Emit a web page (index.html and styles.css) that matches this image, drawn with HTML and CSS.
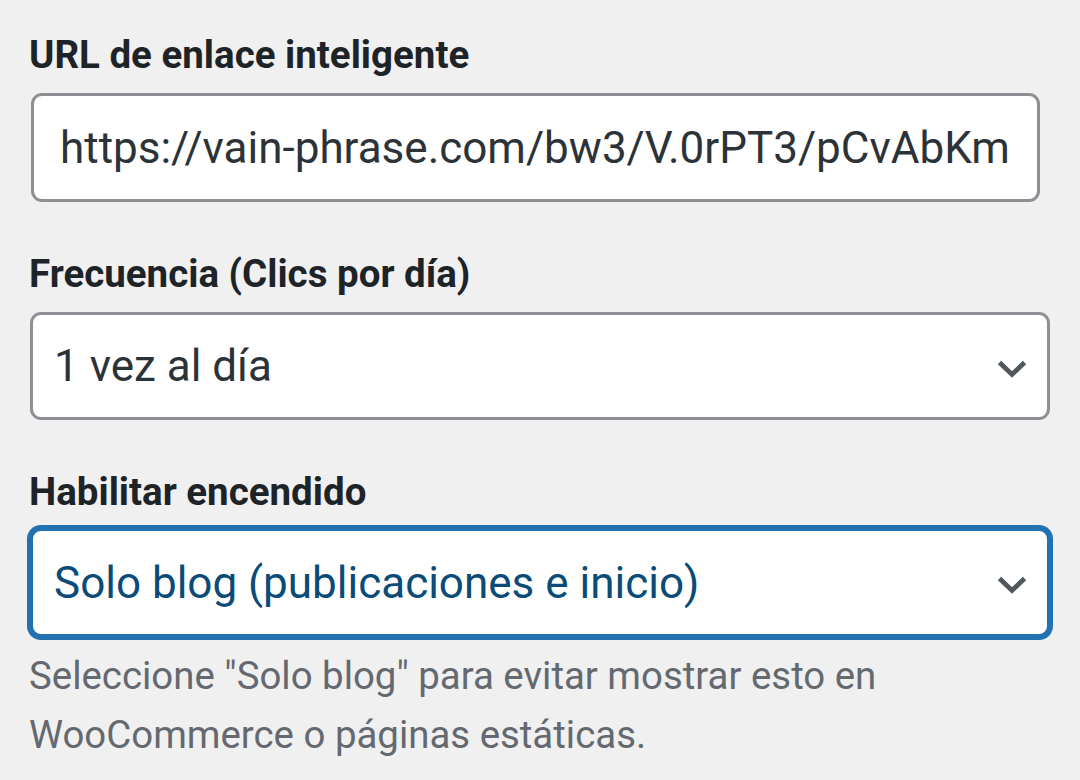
FILE: index.html
```html
<!DOCTYPE html>
<html lang="es">
<head>
<meta charset="utf-8">
<title>Ajustes</title>
<link rel="stylesheet" href="styles.css">
</head>
<body>
<div class="form">
  <div class="field">
    <label class="label" for="url">URL de enlace inteligente</label>
    <input class="text-input" id="url" type="text" value="https://vain-phrase.com/bw3/V.0rPT3/pCvAbKm">
  </div>
  <div class="field">
    <div class="label">Frecuencia (Clics por día)</div>
    <div class="select" role="combobox">
      <span class="select-value">1 vez al día</span>
      <svg class="chevron" viewBox="0 0 30 18" width="30" height="18" aria-hidden="true"><path d="M2.5 2.5 L15 14.5 L27.5 2.5" fill="none" stroke="#50575e" stroke-width="4.8"/></svg>
    </div>
  </div>
  <div class="field field-focus">
    <div class="label">Habilitar encendido</div>
    <div class="select select-focus" role="combobox">
      <span class="select-value">Solo blog (publicaciones e inicio)</span>
      <svg class="chevron" viewBox="0 0 30 18" width="30" height="18" aria-hidden="true"><path d="M2.5 2.5 L15 14.5 L27.5 2.5" fill="none" stroke="#50575e" stroke-width="4.8"/></svg>
    </div>
    <p class="description">Seleccione "Solo blog" para evitar mostrar esto en WooCommerce o páginas estáticas.</p>
  </div>
</div>
</body>
</html>
```
FILE: styles.css
```css
html, body {
  margin: 0;
  padding: 0;
  background: #f0f0f1;
}
body {
  font-family: Roboto, "Noto Sans", "Liberation Sans", sans-serif;
  color: #1d2327;
}
.form {
  padding: 32px 30px 0 30px;
  width: 1020px;
  display: flex;
  flex-direction: column;
  gap: 49px;
}
.field {
  display: flex;
  flex-direction: column;
}
.label {
  display: block;
  font-size: 38.5px;
  line-height: 46px;
  font-weight: 700;
  color: #1d2327;
  margin: 0 0 15px -1px;
}
.field-focus .label {
  margin-bottom: 13px;
}
.text-input {
  box-sizing: border-box;
  width: 1009px;
  height: 109px;
  margin: 0 0 0 1px;
  padding: 0 24px 0 26px;
  border: 3px solid #8c8f94;
  border-radius: 11px;
  background: #fff;
  font-family: inherit;
  font-size: 44px;
  color: #2c3338;
  outline: none;
}
.select {
  box-sizing: border-box;
  width: 1020px;
  height: 108px;
  padding: 0 20px 0 21px;
  border: 3px solid #8c8f94;
  border-radius: 11px;
  background: #fff;
  display: flex;
  align-items: center;
  justify-content: space-between;
  font-size: 44px;
  color: #2c3338;
}
.select-focus {
  height: 109px;
  border-color: #2271b1;
  box-shadow: 0 0 0 3px #2271b1;
  color: #0a4b78;
}
.select-value {
  white-space: nowrap;
}
.chevron {
  display: block;
  margin-top: 5px;
  flex: none;
}
.description {
  margin: 9px 0 0 -1px;
  font-size: 38.4px;
  line-height: 59px;
  color: #646970;
}
```
